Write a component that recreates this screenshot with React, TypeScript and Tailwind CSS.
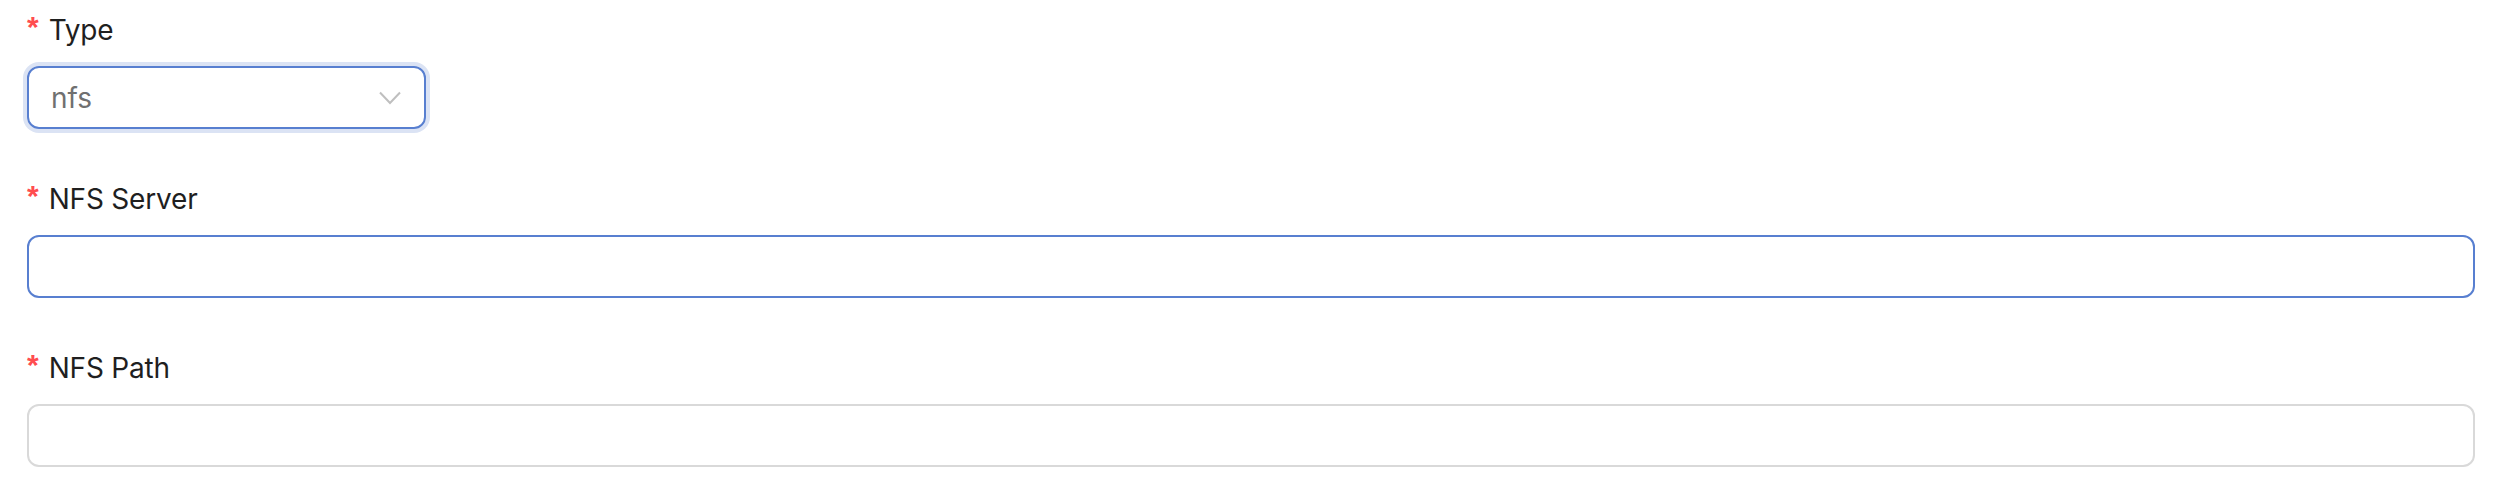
import React from "react";

function Label({ text }: { text: string }) {
  return (
    <div className="h-[44px] mb-[14px] flex items-center text-[28px] leading-[44px] text-[#1f1f1f]">
      <span className="text-[#ff4d4f] text-[30px] font-bold mr-[10px] leading-none relative top-[-3px]" style={{ fontFamily: '"Liberation Sans", sans-serif' }}>*</span>
      <span className="tracking-[-0.2px]">{text}</span>
    </div>
  );
}

export default function App() {
  return (
    <div className="w-[2506px] h-[490px] bg-white pt-[8px] pl-[27px] pr-[31px]" style={{ fontFamily: 'Inter, "Noto Sans", sans-serif' }}>
      <div className="mb-[48px]">
        <Label text="Type" />
        <div className="w-[399px] h-[63px] rounded-[12px] border-2 border-[#587fd0] shadow-[0_0_0_4px_#dbe3f4] flex items-center pl-[22px] pr-[22px] justify-between">
          <span className="text-[28px] text-[#707070]">nfs</span>
          <svg width="22" height="14" viewBox="0 0 22 14" className="mr-[1px]">
            <polyline points="1,1.5 11,12 21,1.5" fill="none" stroke="#bfbfbf" strokeWidth="2" />
          </svg>
        </div>
      </div>
      <div className="mb-[48px]">
        <Label text="NFS Server" />
        <div className="w-full h-[63px] rounded-[12px] border-2 border-[#587fd0] bg-white" />
      </div>
      <div>
        <Label text="NFS Path" />
        <div className="w-full h-[63px] rounded-[12px] border-2 border-[#d9d9d9] bg-white" />
      </div>
    </div>
  );
}
